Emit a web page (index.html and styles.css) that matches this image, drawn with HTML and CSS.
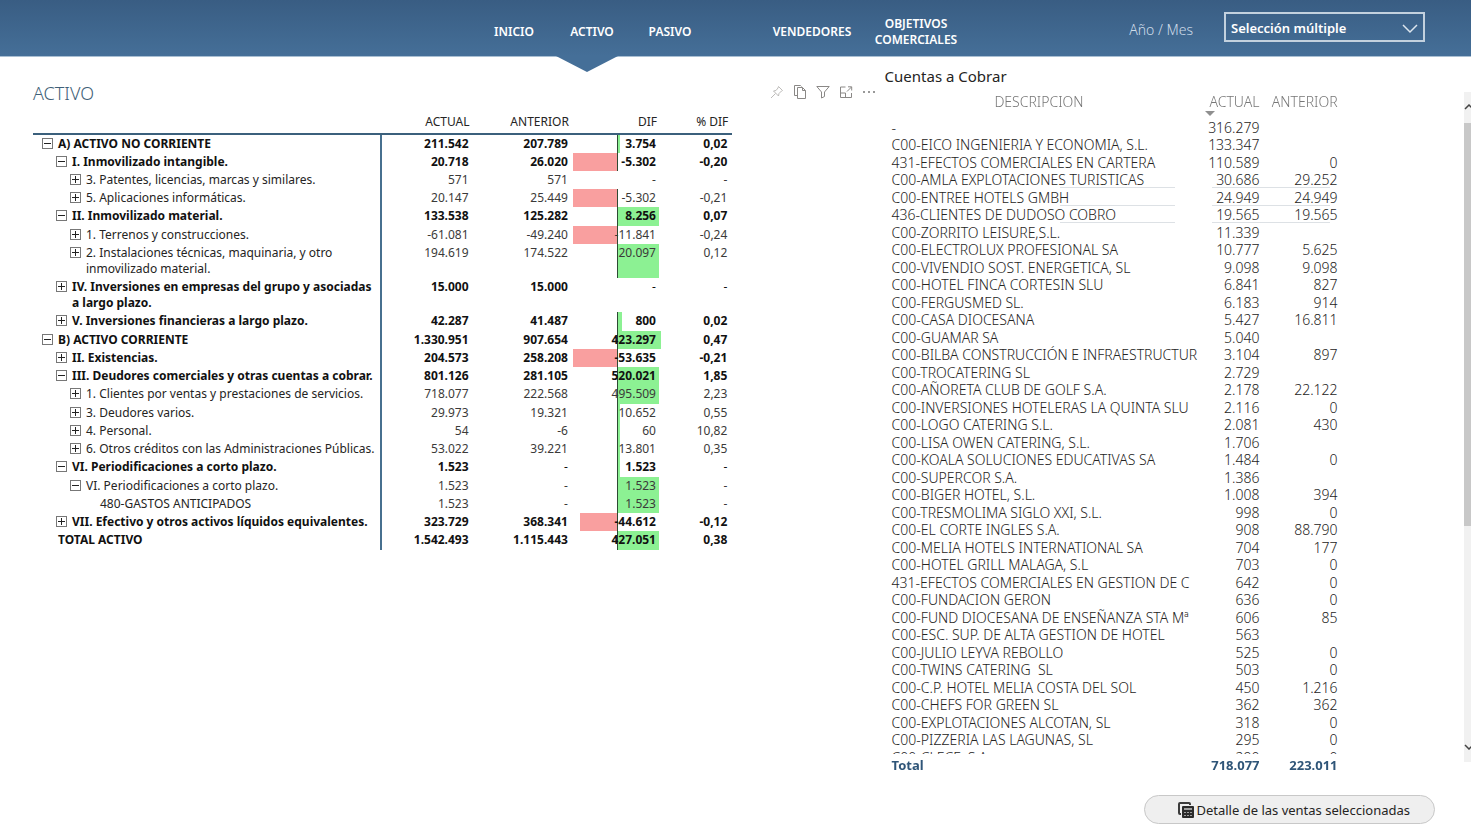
FILE: index.html
```html
<!DOCTYPE html>
<html lang="es">
  <head>
    <meta charset="UTF-8" />
    <meta name="viewport" content="width=device-width, initial-scale=1.0" />
    <title>Activo</title>
    <link rel="stylesheet" href="styles.css">
  </head>
  <body>
    <header class="topbar">
      <nav class="nav">
        <a href="#inicio">INICIO</a>
        <a href="#activo" class="active">ACTIVO</a>
        <a href="#pasivo">PASIVO</a>
        <a href="#vendedores" class="wide second">VENDEDORES</a>
        <a href="#objetivos" class="wide">OBJETIVOS<br>COMERCIALES</a>
      </nav>
      <div class="filter">
        <label for="periodo">Año / Mes</label>
        <div class="selectBox">
          <select id="periodo">
            <option>Selección múltiple</option>
          </select>
          <svg width="16" height="10" viewBox="0 0 16 10"><path d="M1 1l7 7 7-7" /></svg>
        </div>
      </div>
    </header>

    <main class="page">
      <section class="balance">
        <div class="balanceHead">
          <h1>ACTIVO</h1>
          <div class="tools">
            <button class="pin" aria-label="Anclar"><svg viewBox="0 0 14 14"><path d="M8.500 1.500l4 4-1 .5-2.500 2.500-.5 2.500-5-5 2.500-.5L8 3zM5.500 8.500l-4.500 4.500" /></svg></button>
            <button aria-label="Copiar"><svg viewBox="0 0 14 14"><path d="M4 10.500H1.500V.5h6l1 1M4.500 2.500h5l3 3v8h-8zM9.500 2.500v3h3" /></svg></button>
            <button aria-label="Filtros"><svg viewBox="0 0 14 14"><path d="M.8 1.500h12.400L8.500 7v4.500l-3 1.500V7z" /></svg></button>
            <button aria-label="Modo enfoque"><svg viewBox="0 0 14 14"><path d="M6.500 2H1.500v10.500h11V8M1.500 8h5v4.500M8 6.500l4.500-4.500M9 1.800h3.700v3.700" /></svg></button>
            <button class="more" aria-label="Más opciones"><svg viewBox="0 0 14 14"><circle cx="2" cy="7" r="1" /><circle cx="7" cy="7" r="1" /><circle cx="12" cy="7" r="1" /></svg></button>
          </div>
        </div>

        <table class="matrix">
          <colgroup>
            <col class="cName"><col class="cActual"><col class="cAnterior"><col class="cDif"><col class="cPct">
          </colgroup>
          <thead>
            <tr><td></td><th>ACTUAL</th><th>ANTERIOR</th><th>DIF</th><th>% DIF</th></tr>
          </thead>
          <tbody>
            <tr class="b"><th><div class="l1"><button class="tg minus" aria-label="Contraer"></button>A) ACTIVO NO CORRIENTE</div></th><td>211.542</td><td>207.789</td><td class="dif"><i class="pos" style="width: 3%"></i>3.754</td><td>0,02</td></tr>
            <tr class="b"><th><div class="l2"><button class="tg minus" aria-label="Contraer"></button>I. Inmovilizado intangible.</div></th><td>20.718</td><td>26.020</td><td class="dif"><i class="neg" style="width: 50%"></i>-5.302</td><td>-0,20</td></tr>
            <tr><th><div class="l3"><button class="tg" aria-label="Expandir"></button>3. Patentes, licencias, marcas y similares.</div></th><td>571</td><td>571</td><td>-</td><td>-</td></tr>
            <tr><th><div class="l3"><button class="tg" aria-label="Expandir"></button>5. Aplicaciones informáticas.</div></th><td>20.147</td><td>25.449</td><td class="dif"><i class="neg" style="width: 50%"></i>-5.302</td><td>-0,21</td></tr>
            <tr class="b"><th><div class="l2"><button class="tg minus" aria-label="Contraer"></button>II. Inmovilizado material.</div></th><td>133.538</td><td>125.282</td><td class="dif"><i class="pos" style="width: 48%"></i>8.256</td><td>0,07</td></tr>
            <tr><th><div class="l3"><button class="tg" aria-label="Expandir"></button>1. Terrenos y construcciones.</div></th><td>-61.081</td><td>-49.240</td><td class="dif"><i class="neg" style="width: 50%"></i>-11.841</td><td>-0,24</td></tr>
            <tr class="tall"><th><div class="l3"><button class="tg" aria-label="Expandir"></button><span>2. Instalaciones técnicas, maquinaria, y otro<br>inmovilizado material.</span></div></th><td>194.619</td><td>174.522</td><td class="dif"><i class="pos" style="width: 48%"></i>20.097</td><td>0,12</td></tr>
            <tr class="b tall"><th><div class="l2"><button class="tg" aria-label="Expandir"></button><span>IV. Inversiones en empresas del grupo y asociadas<br>a largo plazo.</span></div></th><td>15.000</td><td>15.000</td><td class="n">-</td><td class="n">-</td></tr>
            <tr class="b"><th><div class="l2"><button class="tg" aria-label="Expandir"></button>V. Inversiones financieras a largo plazo.</div></th><td>42.287</td><td>41.487</td><td class="dif"><i class="pos" style="width: 6%"></i>800</td><td>0,02</td></tr>
            <tr class="b"><th><div class="l1"><button class="tg minus" aria-label="Contraer"></button>B) ACTIVO CORRIENTE</div></th><td>1.330.951</td><td>907.654</td><td class="dif"><i class="pos" style="width: 50%"></i>423.297</td><td>0,47</td></tr>
            <tr class="b"><th><div class="l2"><button class="tg" aria-label="Expandir"></button>II. Existencias.</div></th><td>204.573</td><td>258.208</td><td class="dif"><i class="neg" style="width: 50%"></i>-53.635</td><td>-0,21</td></tr>
            <tr class="b"><th><div class="l2"><button class="tg minus" aria-label="Contraer"></button>III. Deudores comerciales y otras cuentas a cobrar.</div></th><td>801.126</td><td>281.105</td><td class="dif"><i class="pos" style="width: 48%"></i>520.021</td><td>1,85</td></tr>
            <tr><th><div class="l3"><button class="tg" aria-label="Expandir"></button>1. Clientes por ventas y prestaciones de servicios.</div></th><td>718.077</td><td>222.568</td><td class="dif"><i class="pos" style="width: 48%"></i>495.509</td><td>2,23</td></tr>
            <tr><th><div class="l3"><button class="tg" aria-label="Expandir"></button>3. Deudores varios.</div></th><td>29.973</td><td>19.321</td><td class="dif"><i class="pos" style="width: 3%"></i>10.652</td><td>0,55</td></tr>
            <tr><th><div class="l3"><button class="tg" aria-label="Expandir"></button>4. Personal.</div></th><td>54</td><td>-6</td><td class="dif"><i class="pos" style="width: 3%"></i>60</td><td>10,82</td></tr>
            <tr><th><div class="l3"><button class="tg" aria-label="Expandir"></button>6. Otros créditos con las Administraciones Públicas.</div></th><td>53.022</td><td>39.221</td><td class="dif"><i class="pos" style="width: 3%"></i>13.801</td><td>0,35</td></tr>
            <tr class="b"><th><div class="l2"><button class="tg minus" aria-label="Contraer"></button>VI. Periodificaciones a corto plazo.</div></th><td>1.523</td><td class="n">-</td><td class="dif"><i class="pos" style="width: 3%"></i>1.523</td><td class="n">-</td></tr>
            <tr><th><div class="l3"><button class="tg minus" aria-label="Contraer"></button>VI. Periodificaciones a corto plazo.</div></th><td>1.523</td><td>-</td><td class="dif"><i class="pos" style="width: 48%"></i>1.523</td><td>-</td></tr>
            <tr><th><div class="l4">480-GASTOS ANTICIPADOS</div></th><td>1.523</td><td>-</td><td class="dif"><i class="pos" style="width: 48%"></i>1.523</td><td>-</td></tr>
            <tr class="b"><th><div class="l2"><button class="tg" aria-label="Expandir"></button>VII. Efectivo y otros activos líquidos equivalentes.</div></th><td>323.729</td><td>368.341</td><td class="dif"><i class="neg" style="width: 42%"></i>-44.612</td><td>-0,12</td></tr>
            <tr class="b"><th><div class="total">TOTAL ACTIVO</div></th><td>1.542.493</td><td>1.115.443</td><td class="dif"><i class="pos" style="width: 48%"></i>427.051</td><td>0,38</td></tr>
          </tbody>
        </table>
      </section>

      <section class="cuentas">
        <h2>Cuentas a Cobrar</h2>
        <div class="listRow">
          <div class="listScroll">
            <table class="list">
              <colgroup><col class="cDesc"><col class="cNum"><col class="cNum2"></colgroup>
              <thead>
                <tr><th class="desc">DESCRIPCION</th><th class="sorted">ACTUAL</th><th>ANTERIOR</th></tr>
              </thead>
              <tbody>
                <tr><td>-</td><td>316.279</td><td></td></tr>
                <tr><td>C00-EICO INGENIERIA Y ECONOMIA, S.L.</td><td>133.347</td><td></td></tr>
                <tr><td>431-EFECTOS COMERCIALES EN CARTERA</td><td>110.589</td><td>0</td></tr>
                <tr class="ruled"><td>C00-AMLA EXPLOTACIONES TURISTICAS</td><td>30.686</td><td>29.252</td></tr>
                <tr class="ruled"><td>C00-ENTREE HOTELS GMBH</td><td>24.949</td><td>24.949</td></tr>
                <tr class="ruled"><td>436-CLIENTES DE DUDOSO COBRO</td><td>19.565</td><td>19.565</td></tr>
                <tr><td>C00-ZORRITO LEISURE,S.L.</td><td>11.339</td><td></td></tr>
                <tr><td>C00-ELECTROLUX PROFESIONAL SA</td><td>10.777</td><td>5.625</td></tr>
                <tr><td>C00-VIVENDIO SOST. ENERGETICA, SL</td><td>9.098</td><td>9.098</td></tr>
                <tr><td>C00-HOTEL FINCA CORTESIN SLU</td><td>6.841</td><td>827</td></tr>
                <tr><td>C00-FERGUSMED SL.</td><td>6.183</td><td>914</td></tr>
                <tr><td>C00-CASA DIOCESANA</td><td>5.427</td><td>16.811</td></tr>
                <tr><td>C00-GUAMAR SA</td><td>5.040</td><td></td></tr>
                <tr><td>C00-BILBA CONSTRUCCIÓN E INFRAESTRUCTUR</td><td>3.104</td><td>897</td></tr>
                <tr><td>C00-TROCATERING SL</td><td>2.729</td><td></td></tr>
                <tr><td>C00-AÑORETA CLUB DE GOLF S.A.</td><td>2.178</td><td>22.122</td></tr>
                <tr><td>C00-INVERSIONES HOTELERAS LA QUINTA SLU</td><td>2.116</td><td>0</td></tr>
                <tr><td>C00-LOGO CATERING S.L.</td><td>2.081</td><td>430</td></tr>
                <tr><td>C00-LISA OWEN CATERING, S.L.</td><td>1.706</td><td></td></tr>
                <tr><td>C00-KOALA SOLUCIONES EDUCATIVAS SA</td><td>1.484</td><td>0</td></tr>
                <tr><td>C00-SUPERCOR S.A.</td><td>1.386</td><td></td></tr>
                <tr><td>C00-BIGER HOTEL, S.L.</td><td>1.008</td><td>394</td></tr>
                <tr><td>C00-TRESMOLIMA SIGLO XXI, S.L.</td><td>998</td><td>0</td></tr>
                <tr><td>C00-EL CORTE INGLES S.A.</td><td>908</td><td>88.790</td></tr>
                <tr><td>C00-MELIA HOTELS INTERNATIONAL SA</td><td>704</td><td>177</td></tr>
                <tr><td>C00-HOTEL GRILL MALAGA, S.L</td><td>703</td><td>0</td></tr>
                <tr><td>431-EFECTOS COMERCIALES EN GESTION DE C</td><td>642</td><td>0</td></tr>
                <tr><td>C00-FUNDACION GERON</td><td>636</td><td>0</td></tr>
                <tr><td>C00-FUND DIOCESANA DE ENSEÑANZA STA Mª</td><td>606</td><td>85</td></tr>
                <tr><td>C00-ESC. SUP. DE ALTA GESTION DE HOTEL</td><td>563</td><td></td></tr>
                <tr><td>C00-JULIO LEYVA REBOLLO</td><td>525</td><td>0</td></tr>
                <tr><td>C00-TWINS CATERING&nbsp; SL</td><td>503</td><td>0</td></tr>
                <tr><td>C00-C.P. HOTEL MELIA COSTA DEL SOL</td><td>450</td><td>1.216</td></tr>
                <tr><td>C00-CHEFS FOR GREEN SL</td><td>362</td><td>362</td></tr>
                <tr><td>C00-EXPLOTACIONES ALCOTAN, SL</td><td>318</td><td>0</td></tr>
                <tr><td>C00-PIZZERIA LAS LAGUNAS, SL</td><td>295</td><td>0</td></tr>
                <tr><td>C00-CLECE, S.A.</td><td>290</td><td>0</td></tr>
              </tbody>
              <tfoot>
                <tr><td>Total</td><td>718.077</td><td>223.011</td></tr>
              </tfoot>
            </table>
          </div>
          <div class="scrollbar">
            <svg width="11" height="6" viewBox="0 0 11 6"><path d="M1 5l4-4 4 4" /></svg>
            <div class="track"><div class="thumb"></div></div>
            <svg width="11" height="6" viewBox="0 0 11 6"><path d="M1 1l4 4 4-4" /></svg>
          </div>
        </div>
        <button class="detail">
          <svg width="16" height="16" viewBox="0 0 16 16">
            <path d="M3 12H2a1 1 0 0 1-1-1V2a1 1 0 0 1 1-1h9a1 1 0 0 1 1 1v1" fill="none" stroke="#3c3c3c" stroke-width="2" />
            <rect x="4" y="4" width="12" height="12" rx="1" fill="#2b2b2b" />
            <path d="M6 6h8v2H6zM6 10h2v1H6zM9 10h2v1H9zM12 10h2v1h-2zM6 13h2v1H6zM9 13h2v1H9zM12 13h2v1h-2z" fill="#a0a0a0" />
          </svg>
          Detalle de las ventas seleccionadas
        </button>
      </section>
    </main>
  </body>
</html>
```
FILE: styles.css
```css
* {
  box-sizing: border-box;
}
body {
  margin: 0;
  height: 100vh;
  display: flex;
  flex-direction: column;
  background-color: white;
  color: #252423;
  font-family: "Noto Sans", "Open Sans", sans-serif;
  font-size: 12px;
}
button {
  font-family: inherit;
  padding: 0;
  cursor: pointer;
}

/* top bar */
.topbar {
  display: flex;
  justify-content: space-between;
  height: 57px;
  padding: 0 46px 0 475px;
  background: linear-gradient(#395d83, #456f98);
  border-bottom: 1px solid #a9bfd3;
}
.nav {
  display: flex;
  align-items: center;
  padding-top: 8px;
}
.nav a {
  position: relative;
  width: 78px;
  color: white;
  font-weight: 600;
  line-height: 16px;
  text-align: center;
  text-decoration: none;
}
.nav a.wide {
  width: 104px;
}
.nav a.second {
  margin-left: 51px;
}
.nav .active::after {
  content: "";
  position: absolute;
  top: 32px;
  left: 3px;
  width: 62px;
  height: 16px;
  background-color: #456f98;
  clip-path: polygon(0 0, 100% 0, 50% 100%);
}
.filter {
  display: flex;
  align-items: flex-start;
  gap: 31px;
  padding-top: 12px;
}
.filter label {
  color: #cfdce9;
  font-size: 14px;
  font-weight: 300;
  line-height: 36px;
}
.selectBox {
  position: relative;
}
.selectBox select {
  width: 201px;
  height: 30px;
  padding: 1px 5px 0;
  border: 2px solid #c3d1de;
  border-radius: 0;
  appearance: none;
  background-color: transparent;
  color: white;
  font-family: inherit;
  font-size: 13px;
  font-weight: 600;
}
.selectBox svg {
  position: absolute;
  top: 12px;
  right: 7px;
  fill: none;
  stroke: #dde6ee;
  stroke-width: 1.5;
  pointer-events: none;
}

/* page */
.page {
  flex: 1;
  min-height: 0;
  display: grid;
  grid-template-columns: minmax(0, 60fr) minmax(0, 40fr);
}
.balance {
  padding: 22px 7px 0 33px;
}
.balanceHead {
  display: flex;
  justify-content: space-between;
  height: 32px;
}
h1 {
  margin: 0;
  color: #3f5f78;
  font-size: 18px;
  font-weight: 300;
  line-height: 28px;
}
.tools {
  display: flex;
  align-items: center;
  gap: 9px;
  height: 26px;
}
.tools button {
  width: 14px;
  height: 14px;
  border: 0;
  background: none;
}
.tools svg {
  display: block;
  width: 14px;
  height: 14px;
  fill: none;
  stroke: #8a8886;
}
.tools .pin svg {
  stroke: #bdbbb9;
}
.tools .more svg {
  fill: #777;
  stroke: none;
}

table {
  border-collapse: collapse;
  table-layout: fixed;
}
.matrix {
  width: 83%;
}
.cName { width: 49.8%; }
.cActual { width: 13.2%; }
.cAnterior { width: 14.2%; }
.cDif { width: 12.6%; }
.cPct { width: 10.2%; }
.matrix th,
.matrix td {
  padding: 1px 4px 0 0;
  height: 18px;
  line-height: 16px;
  text-align: right;
  vertical-align: top;
  font-weight: 400;
  white-space: nowrap;
}
.matrix thead th,
.matrix thead td {
  height: 23px;
  padding-top: 3px;
  border-bottom: 2px solid #3b607c;
}
.matrix tbody tr:nth-child(4n + 1) td {
  height: 19px;
}
.matrix tbody .tall td {
  height: 34px;
}
.matrix tbody th {
  padding-right: 0;
  border-right: 2px solid #47708f;
  text-align: left;
}
.matrix tbody td {
  padding-right: 5px;
  color: #3b3a39;
}
.matrix .b th,
.matrix .b td {
  color: #111;
  font-weight: 700;
}
.matrix .b td.n {
  font-weight: 400;
}
.matrix th div {
  display: flex;
  align-items: flex-start;
}
.l1 { padding-left: 9px; }
.l2 { padding-left: 23px; }
.l3 { padding-left: 37px; }
.l4 { padding-left: 67px; }
.total { padding-left: 25px; }

/* expand / collapse box */
.tg {
  flex: none;
  width: 11px;
  height: 11px;
  margin: 2px 5px 0 0;
  border: 1px solid #777;
  background:
    linear-gradient(#222, #222) center / 7px 1px no-repeat,
    linear-gradient(#222, #222) center / 1px 7px no-repeat;
}
.tg.minus {
  background: linear-gradient(#222, #222) center / 7px 1px no-repeat;
}

/* data bars */
.dif {
  position: relative;
  isolation: isolate;
}
.dif::before {
  content: "";
  position: absolute;
  z-index: -1;
  top: 0;
  bottom: 0;
  left: 50%;
  width: 1px;
  background-color: #2d4a33;
}
.dif i {
  position: absolute;
  z-index: -2;
  top: 0;
  bottom: 0;
}
.dif .pos {
  left: 50%;
  background-color: #8cf193;
}
.dif .neg {
  right: 50%;
  background-color: #f99f9f;
}

/* right list */
.cuentas {
  display: flex;
  flex-direction: column;
  min-height: 0;
  padding-bottom: 8px;
}
h2 {
  margin: 0;
  padding: 9px 0 6px 2px;
  color: #252423;
  font-size: 15px;
  font-weight: 400;
  line-height: 20px;
}
.listRow {
  flex: 1;
  min-height: 0;
  display: flex;
  justify-content: space-between;
}
.listScroll {
  width: 78%;
  overflow-y: auto;
  scrollbar-width: none;
}
.list {
  width: 100%;
  font-size: 14px;
  font-weight: 300;
}
.cDesc { width: 69%; }
.cNum { width: 14%; }
.cNum2 { width: 17%; }
.list th,
.list td {
  height: 17px;
  padding: 0 4px 0 0;
  line-height: 17px;
  text-align: right;
  white-space: nowrap;
}
.list tbody tr:nth-child(odd) td {
  height: 18px;
}
.list td:first-child {
  padding-left: 9px;
  text-align: left;
}
.list thead {
  position: sticky;
  top: 0;
  background-color: white;
}
.list th {
  height: 26px;
  padding-bottom: 8px;
  color: #777;
  font-weight: 300;
}
.list th.desc {
  text-align: center;
}
.list th.sorted {
  position: relative;
}
.list th.sorted::after {
  content: "";
  position: absolute;
  left: 6px;
  bottom: 2px;
  border: 5px solid transparent;
  border-top-color: #8f8f8f;
  border-bottom: 0;
}
.list .ruled td {
  background: linear-gradient(#dde1e5, #dde1e5) right bottom / 80% 1px no-repeat;
}
.list .ruled td:first-child {
  background-position: right 24px bottom;
  background-size: 115px 1px;
}
.list .ruled td:last-child {
  background-position: left bottom;
  background-size: 85% 1px;
}
.list tfoot {
  position: sticky;
  bottom: 0;
  background-color: white;
}
.list tfoot td {
  height: 20px;
  padding-top: 3px;
  color: #2f5578;
  font-size: 13px;
  font-weight: 700;
}
.scrollbar {
  display: flex;
  flex-direction: column;
  width: 7px;
  margin-bottom: 12px;
  padding: 12px 0;
  overflow: hidden;
  background-color: #f1f1f1;
}
.scrollbar svg {
  flex: none;
  fill: none;
  stroke: #444;
  stroke-width: 1.5;
}
.track {
  flex: 1;
  padding: 13px 0 10px;
}
.thumb {
  height: 66%;
  background-color: #c8c8c8;
}
.detail {
  display: flex;
  justify-content: flex-end;
  align-items: center;
  align-self: flex-end;
  gap: 2px;
  width: 291px;
  height: 29px;
  margin: 21px 36px 0 0;
  padding-right: 24px;
  border: 1px solid #c8c8c8;
  border-radius: 15px;
  background-color: #efefef;
  color: #252423;
  font-size: 13px;
}
```
